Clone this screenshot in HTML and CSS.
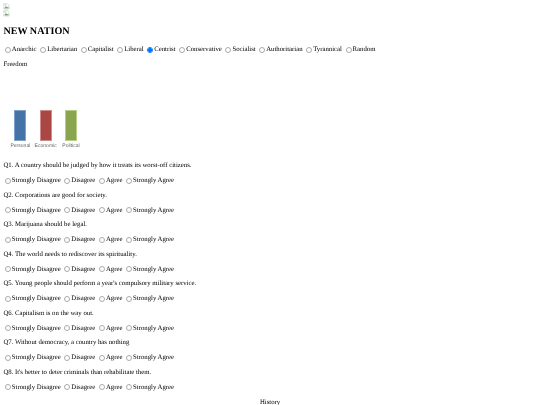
FILE: index.html
```
<!DOCTYPE html>
<html lang="en">
<head>
<meta charset="utf-8">
<title>New Nation</title>
<link rel="stylesheet" href="styles.css">
</head>
<body>
<div class="logos">
<svg class="broken" viewBox="0 0 16 16"><path d="M1.5 1.5H11L14.5 5V14.5H1.5Z" fill="#fff" stroke="#bbb"/><path d="M3 12 7 7l3 3 3-2v5H3Z" fill="#7fae66"/><path d="M3 3h5v3H3Z" fill="#b9d0f0"/></svg>
<svg class="broken" viewBox="0 0 16 16"><path d="M1.5 1.5H11L14.5 5V14.5H1.5Z" fill="#fff" stroke="#bbb"/><path d="M3 12 7 7l3 3 3-2v5H3Z" fill="#7fae66"/><path d="M3 3h5v3H3Z" fill="#b9d0f0"/></svg>
</div>
<h2>NEW NATION</h2>
<form class="options gov">
<label><input type="radio" name="gov">Anarchic</label>
<label><input type="radio" name="gov">Libertarian</label>
<label><input type="radio" name="gov">Capitalist</label>
<label><input type="radio" name="gov">Liberal</label>
<label><input type="radio" name="gov" checked>Centrist</label>
<label><input type="radio" name="gov">Conservative</label>
<label><input type="radio" name="gov">Socialist</label>
<label><input type="radio" name="gov">Authoritarian</label>
<label><input type="radio" name="gov">Tyrannical</label>
<label><input type="radio" name="gov">Random</label>
</form>
<p class="freedom">Freedom</p>
<div class="chart">
<div class="col"><div class="bar blue"></div><span>Personal</span></div>
<div class="col"><div class="bar red"></div><span>Economic</span></div>
<div class="col"><div class="bar green"></div><span>Political</span></div>
</div>
<form class="quiz">
<p>Q1. A country should be judged by how it treats its worst-off citizens.</p>
<div class="options"><label><input type="radio" name="q1">Strongly Disagree</label> <label><input type="radio" name="q1">Disagree</label> <label><input type="radio" name="q1">Agree</label> <label><input type="radio" name="q1">Strongly Agree</label></div>
<p>Q2. Corporations are good for society.</p>
<div class="options"><label><input type="radio" name="q2">Strongly Disagree</label> <label><input type="radio" name="q2">Disagree</label> <label><input type="radio" name="q2">Agree</label> <label><input type="radio" name="q2">Strongly Agree</label></div>
<p>Q3. Marijuana should be legal.</p>
<div class="options"><label><input type="radio" name="q3">Strongly Disagree</label> <label><input type="radio" name="q3">Disagree</label> <label><input type="radio" name="q3">Agree</label> <label><input type="radio" name="q3">Strongly Agree</label></div>
<p>Q4. The world needs to rediscover its spirituality.</p>
<div class="options"><label><input type="radio" name="q4">Strongly Disagree</label> <label><input type="radio" name="q4">Disagree</label> <label><input type="radio" name="q4">Agree</label> <label><input type="radio" name="q4">Strongly Agree</label></div>
<p>Q5. Young people should perform a year's compulsory military service.</p>
<div class="options"><label><input type="radio" name="q5">Strongly Disagree</label> <label><input type="radio" name="q5">Disagree</label> <label><input type="radio" name="q5">Agree</label> <label><input type="radio" name="q5">Strongly Agree</label></div>
<p>Q6. Capitalism is on the way out.</p>
<div class="options"><label><input type="radio" name="q6">Strongly Disagree</label> <label><input type="radio" name="q6">Disagree</label> <label><input type="radio" name="q6">Agree</label> <label><input type="radio" name="q6">Strongly Agree</label></div>
<p>Q7. Without democracy, a country has nothing</p>
<div class="options"><label><input type="radio" name="q7">Strongly Disagree</label> <label><input type="radio" name="q7">Disagree</label> <label><input type="radio" name="q7">Agree</label> <label><input type="radio" name="q7">Strongly Agree</label></div>
<p>Q8. It's better to deter criminals than rehabilitate them.</p>
<div class="options"><label><input type="radio" name="q8">Strongly Disagree</label> <label><input type="radio" name="q8">Disagree</label> <label><input type="radio" name="q8">Agree</label> <label><input type="radio" name="q8">Strongly Agree</label></div>
</form>
<div class="history">History</div>
</body>
</html>
```
FILE: styles.css
```
html {
  overflow: hidden;
  height: 100%;
}
body {
  margin: 0;
  padding: 3.375px;
  height: 100%;
  box-sizing: border-box;
  font-family: "Liberation Serif", "Times New Roman", serif;
  font-size: 6.75px;
  line-height: 8px;
  color: #000;
  background: #fff;
  text-rendering: geometricPrecision;
  filter: blur(0.3px);
}
.logos {
  display: flex;
  flex-direction: column;
}
.broken {
  display: block;
  width: 6.75px;
  height: 6.75px;
}
h2 {
  font-size: 10.125px;
  line-height: 12px;
  margin: 9.5px 0 4.5px;
}
p {
  margin: 0;
}
.options {
  display: flex;
  gap: 2.14px;
  height: 14.75px;
  align-items: center;
}
.options label {
  display: flex;
  align-items: center;
}
.options input {
  appearance: none;
  box-sizing: border-box;
  width: 6px;
  height: 6px;
  margin: 0 1.02px 1.5px 1.44px;
  border: 0.5px solid #aaa;
  border-radius: 50%;
  background: #fff;
}
.options input:checked {
  border-color: #0075ff;
  background: radial-gradient(circle, #0075ff 0 58%, #fff 70%);
}
.freedom {
  margin-top: 3.5px;
}
.chart {
  display: flex;
  height: 79.5px;
  padding-left: 8px;
  gap: 7.3px;
  align-items: flex-end;
}
.col {
  display: flex;
  flex-direction: column;
  align-items: center;
  width: 18px;
  font-family: "Liberation Sans", Arial, sans-serif;
  font-size: 5.06px;
  line-height: 6px;
  color: #666;
}
.bar {
  box-sizing: border-box;
  width: 12px;
  height: 31px;
  margin-bottom: 2px;
  border: 0.5px solid;
}
.blue { background: #4572a7; border-color: #7ea2cc; }
.red { background: #aa4643; border-color: #d08a88; }
.green { background: #89a54e; border-color: #b7cd88; }
.quiz {
  margin-top: 10.5px;
}
.quiz p {
  height: 14.75px;
  line-height: 14.75px;
}
.history {
  text-align: center;
  margin-top: 3.5px;
}
```
